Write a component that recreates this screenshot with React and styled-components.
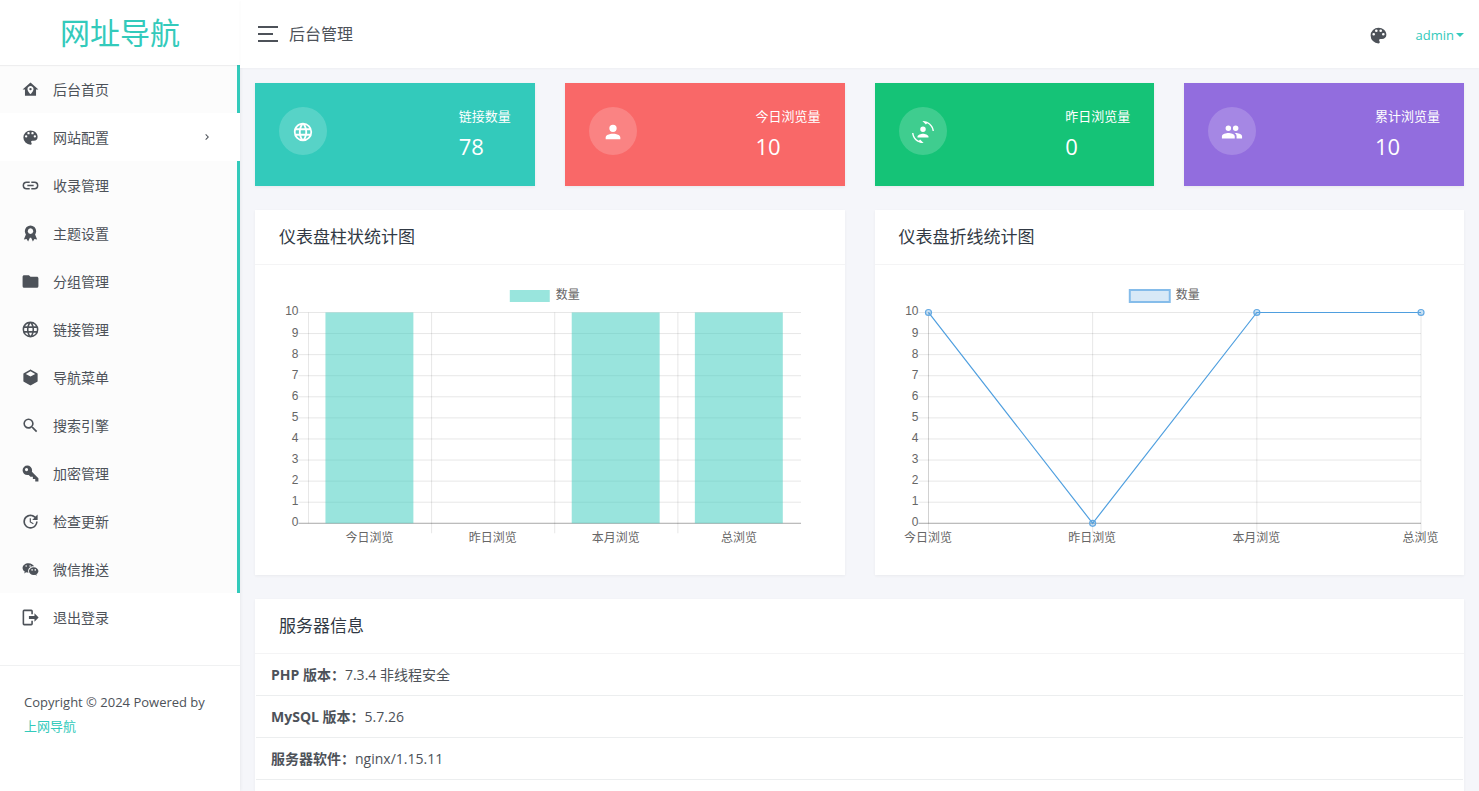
import React from 'react'
import styled, { createGlobalStyle } from 'styled-components';

const Global = createGlobalStyle`
  * { box-sizing: border-box; }
  body {
    margin: 0;
    background: #f5f6fa;
    color: #4d5259;
    font-family: "Open Sans", "Noto Sans CJK SC", sans-serif;
    font-size: 14px;
    line-height: 24px;
  }
  a { color: inherit; text-decoration: none; }
`;

const icons = {
  home: 'M12,3L2,12H5V20H19V12H22L12,3M12,7.7C14.1,7.7 15.8,9.4 15.8,11.5C15.8,14.5 12,18 12,18C12,18 8.2,14.5 8.2,11.5C8.2,9.4 9.9,7.7 12,7.7M12,10A1.5,1.5 0 0,0 10.5,11.5A1.5,1.5 0 0,0 12,13A1.5,1.5 0 0,0 13.5,11.5A1.5,1.5 0 0,0 12,10Z',
  palette: 'M17.5,12A1.5,1.5 0 0,1 16,10.5A1.5,1.5 0 0,1 17.5,9A1.5,1.5 0 0,1 19,10.5A1.5,1.5 0 0,1 17.5,12M14.5,8A1.5,1.5 0 0,1 13,6.5A1.5,1.5 0 0,1 14.5,5A1.5,1.5 0 0,1 16,6.5A1.5,1.5 0 0,1 14.5,8M9.5,8A1.5,1.5 0 0,1 8,6.5A1.5,1.5 0 0,1 9.5,5A1.5,1.5 0 0,1 11,6.5A1.5,1.5 0 0,1 9.5,8M6.5,12A1.5,1.5 0 0,1 5,10.5A1.5,1.5 0 0,1 6.5,9A1.5,1.5 0 0,1 8,10.5A1.5,1.5 0 0,1 6.5,12M12,3A9,9 0 0,0 3,12A9,9 0 0,0 12,21A1.5,1.5 0 0,0 13.5,19.5C13.5,19.11 13.35,18.76 13.11,18.5C12.88,18.23 12.73,17.88 12.73,17.5A1.5,1.5 0 0,1 14.23,16H16A5,5 0 0,0 21,11C21,6.58 16.97,3 12,3Z',
  link: 'M3.9,12C3.9,10.29 5.29,8.9 7,8.9H11V7H7A5,5 0 0,0 2,12A5,5 0 0,0 7,17H11V15.1H7C5.29,15.1 3.9,13.71 3.9,12M8,13H16V11H8V13M17,7H13V8.9H17C18.71,8.9 20.1,10.29 20.1,12C20.1,13.71 18.71,15.1 17,15.1H13V17H17A5,5 0 0,0 22,12A5,5 0 0,0 17,7Z',
  award: 'M9.5,2.4L12,1.8L14.5,2.4L17,3.8L18.6,6.2L19.2,9L18.6,11.8L17.8,13.2L20.4,19.5L17,18.8L15,22L12.8,17.5H11.2L9,22L7,18.8L3.6,19.5L6.2,13.2L5.4,11.8L4.8,9L5.4,6.2L7,3.8L9.5,2.4M12,5.4L9.6,6.4L8.4,9L9.6,11.6L12,12.6L14.4,11.6L15.6,9L14.4,6.4L12,5.4Z',
  folder: 'M10,4H4C2.89,4 2,4.89 2,6V18A2,2 0 0,0 4,20H20A2,2 0 0,0 22,18V8C22,6.89 21.1,6 20,6H12L10,4Z',
  web: 'M16.36,14C16.44,13.34 16.5,12.68 16.5,12C16.5,11.32 16.44,10.66 16.36,10H19.74C19.9,10.64 20,11.31 20,12C20,12.69 19.9,13.36 19.74,14M14.59,19.56C15.19,18.45 15.65,17.25 15.97,16H18.92C17.96,17.65 16.43,18.93 14.59,19.56M14.34,14H9.66C9.56,13.34 9.5,12.68 9.5,12C9.5,11.32 9.56,10.65 9.66,10H14.34C14.43,10.65 14.5,11.32 14.5,12C14.5,12.68 14.43,13.34 14.34,14M12,19.96C11.17,18.76 10.5,17.43 10.09,16H13.91C13.5,17.43 12.83,18.76 12,19.96M8,8H5.08C6.03,6.34 7.57,5.06 9.4,4.44C8.8,5.55 8.35,6.75 8,8M5.08,16H8C8.35,17.25 8.8,18.45 9.4,19.56C7.57,18.93 6.03,17.65 5.08,16M4.26,14C4.1,13.36 4,12.69 4,12C4,11.31 4.1,10.64 4.26,10H7.64C7.56,10.66 7.5,11.32 7.5,12C7.5,12.68 7.56,13.34 7.64,14M12,4.03C12.83,5.23 13.5,6.57 13.91,8H10.09C10.5,6.57 11.17,5.23 12,4.03M18.92,8H15.97C15.65,6.75 15.19,5.55 14.59,4.44C16.43,5.07 17.96,6.34 18.92,8M12,2C6.47,2 2,6.5 2,12A10,10 0 0,0 12,22A10,10 0 0,0 22,12A10,10 0 0,0 12,2Z',
  cube: 'M21,16.5C21,16.88 20.79,17.21 20.47,17.38L12.57,21.82C12.41,21.94 12.21,22 12,22C11.79,22 11.59,21.94 11.43,21.82L3.53,17.38C3.21,17.21 3,16.88 3,16.5V7.5C3,7.12 3.21,6.79 3.53,6.62L11.43,2.18C11.59,2.06 11.79,2 12,2C12.21,2 12.41,2.06 12.57,2.18L20.47,6.62C20.79,6.79 21,7.12 21,7.5V16.5M12,4.15L6.04,7.5L12,10.85L17.96,7.5L12,4.15Z',
  search: 'M9.5,3A6.5,6.5 0 0,1 16,9.5C16,11.11 15.41,12.59 14.44,13.73L14.71,14H15.5L20.5,19L19,20.5L14,15.5V14.71L13.73,14.44C12.59,15.41 11.11,16 9.5,16A6.5,6.5 0 0,1 3,9.5A6.5,6.5 0 0,1 9.5,3M9.5,5C7,5 5,7 5,9.5C5,12 7,14 9.5,14C12,14 14,12 14,9.5C14,7 12,5 9.5,5Z',
  key: 'M22,18V22H18V19H15V16H12L9.74,13.74C9.19,13.91 8.61,14 8,14A6,6 0 0,1 2,8A6,6 0 0,1 8,2A6,6 0 0,1 14,8C14,8.61 13.91,9.19 13.74,9.74L22,18M7,5A2,2 0 0,0 5,7A2,2 0 0,0 7,9A2,2 0 0,0 9,7A2,2 0 0,0 7,5Z',
  update: 'M21,10.12H14.22L16.96,7.3C14.23,4.6 9.81,4.5 7.08,7.2C4.35,9.91 4.35,14.28 7.08,17C9.81,19.7 14.23,19.7 16.96,17C18.32,15.65 19,14.08 19,12.1H21C21,14.08 20.12,16.65 18.36,18.39C14.85,21.87 9.15,21.87 5.64,18.39C2.14,14.92 2.11,9.28 5.62,5.81C9.13,2.34 14.76,2.34 18.27,5.81L21,3V10.12M12.5,8V12.25L16,14.33L15.28,15.54L11,13V8H12.5Z',
  wechat: 'M9.5,4C5.36,4 2,6.69 2,10C2,11.89 3.08,13.56 4.78,14.66L4,17L6.5,15.5C7.39,15.81 8.37,16 9.41,16C9.15,15.37 9,14.7 9,14C9,10.69 12.13,8 16,8C16.19,8 16.38,8 16.56,8.03C15.54,5.69 12.78,4 9.5,4M6.5,6.5A1,1 0 0,1 7.5,7.5A1,1 0 0,1 6.5,8.5A1,1 0 0,1 5.5,7.5A1,1 0 0,1 6.5,6.5M11.5,6.5A1,1 0 0,1 12.5,7.5A1,1 0 0,1 11.5,8.5A1,1 0 0,1 10.5,7.5A1,1 0 0,1 11.5,6.5M16,9C12.69,9 10,11.24 10,14C10,16.76 12.69,19 16,19C16.67,19 17.31,18.92 17.91,18.75L20,20L19.38,18.13C20.95,17.22 22,15.71 22,14C22,11.24 19.31,9 16,9M14,11.5A1,1 0 0,1 15,12.5A1,1 0 0,1 14,13.5A1,1 0 0,1 13,12.5A1,1 0 0,1 14,11.5M18,11.5A1,1 0 0,1 19,12.5A1,1 0 0,1 18,13.5A1,1 0 0,1 17,12.5A1,1 0 0,1 18,11.5Z',
  logout: 'M17,17.25V14H10V10H17V6.75L22.25,12L17,17.25M13,2A2,2 0 0,1 15,4V8H13V4H4V20H13V16H15V20A2,2 0 0,1 13,22H4A2,2 0 0,1 2,20V4A2,2 0 0,1 4,2H13Z',
  user: 'M12,4A4,4 0 0,1 16,8A4,4 0 0,1 12,12A4,4 0 0,1 8,8A4,4 0 0,1 12,4M12,14C16.42,14 20,15.79 20,18V20H4V18C4,15.79 7.58,14 12,14Z',
  convert: 'M7.5,21.5C4.25,19.94 1.91,16.76 1.55,13H0.05C0.56,19.16 5.71,24 12,24L12.66,23.97L8.85,20.16L7.5,21.5M16.5,2.5C19.75,4.07 22.09,7.24 22.45,11H23.95C23.44,4.84 18.29,0 12,0L11.34,0.03L15.15,3.84L16.5,2.5M6,17C6,15 10,13.9 12,13.9C14,13.9 18,15 18,17V18H6V17M15,9A3,3 0 0,1 12,12A3,3 0 0,1 9,9A3,3 0 0,1 12,6A3,3 0 0,1 15,9Z',
  users: 'M16,13C15.71,13 15.38,13 15.03,13.05C16.19,13.89 17,15 17,16.5V19H23V16.5C23,14.17 18.33,13 16,13M8,13C5.67,13 1,14.17 1,16.5V19H15V16.5C15,14.17 10.33,13 8,13M8,11A3,3 0 0,0 11,8A3,3 0 0,0 8,5A3,3 0 0,0 5,8A3,3 0 0,0 8,11M16,11A3,3 0 0,0 19,8A3,3 0 0,0 16,5A3,3 0 0,0 13,8A3,3 0 0,0 16,11Z',
  chevron: 'M8.59,16.58L13.17,12L8.59,7.41L10,6L16,12L10,18L8.59,16.58Z',
};

function Icon({ name, size = 19 }) {
  return (
    <svg width={size} height={size} viewBox="0 0 24 24" fill="currentColor" aria-hidden="true">
      <path d={icons[name]} />
    </svg>
  );
}

const Page = styled.div`
  display: flex;
  min-height: 100vh;
`;

const Sidebar = styled.aside`
  flex: none;
  width: 240px;
  background: white;
  box-shadow: 0 0 4px rgba(0, 0, 0, 0.08);
`;

const Logo = styled.a`
  display: block;
  position: relative;
  height: 65px;
  line-height: 66px;
  text-align: center;
  font-size: 30px;
  color: #33cabb;
  box-shadow: 0 1px 1px rgba(77, 82, 89, 0.08);
`;

const Menu = styled.nav`
  display: flex;
  flex-direction: column;
  padding-bottom: 24px;
  border-bottom: 1px solid #f0f1f2;
`;

const MenuItem = styled.a`
  display: flex;
  align-items: center;
  height: 48px;
  padding: 0 27px 0 21px;
  background: ${props => props.$active ? "#fcfcfc" : "white"};
  border-right: ${props => props.$active ? "3px solid #33cabb" : "none"};
`;

const MenuText = styled.span`
  flex: 1;
  margin-left: 13px;
  padding-top: 2px;
`;

const Copyright = styled.footer`
  padding: 24px;
  font-size: 13px;
  a { color: #33cabb; }
`;

const Main = styled.div`
  display: flex;
  flex: 1;
  flex-direction: column;
  min-width: 0;
`;

const Header = styled.header`
  display: flex;
  align-items: center;
  justify-content: space-between;
  height: 68px;
  padding: 0 15px 0 18px;
  background: white;
  box-shadow: 0 1px 2px rgba(0, 0, 0, 0.03);
`;

const HeaderSide = styled.div`
  display: flex;
  align-items: center;
  gap: ${props => props.$gap};
`;

const HeaderTools = styled(HeaderSide)`
  padding-top: 2px;
`;

const Toggler = styled.button`
  display: flex;
  flex-direction: column;
  gap: 5px;
  width: 20px;
  padding: 0;
  border: none;
  background: none;
`;

const TogglerBar = styled.span`
  width: ${props => props.$short ? "15px" : "20px"};
  height: 2px;
  background: #4d5259;
`;

const PageTitle = styled.span`
  font-size: 16px;
`;

const ThemeButton = styled.button`
  display: flex;
  padding: 0;
  border: none;
  background: none;
  color: #4d5259;
`;

const UserButton = styled.button`
  display: flex;
  align-items: center;
  gap: 2px;
  padding: 0;
  border: none;
  background: none;
  color: #33cabb;
  font: inherit;
  font-size: 13px;
`;

const Caret = styled.span`
  border-top: 4px solid;
  border-left: 4px solid transparent;
  border-right: 4px solid transparent;
`;

const Content = styled.main`
  display: grid;
  flex: 1;
  grid-template-columns: repeat(4, 1fr);
  grid-template-rows: auto auto 1fr;
  gap: 24px 30px;
  padding: 15px 15px 0;
`;

const StatCard = styled.section`
  display: flex;
  justify-content: space-between;
  height: 103px;
  padding: 24px;
  color: white;
  background: ${props => props.$color};
  box-shadow: 0 1px 3px rgba(0, 0, 0, 0.06);
`;

const StatIcon = styled.span`
  display: flex;
  align-items: center;
  justify-content: center;
  width: 48px;
  height: 48px;
  padding-top: 2px;
  border-radius: 50%;
  background: rgba(255, 255, 255, 0.18);
`;

const StatLabel = styled.p`
  margin: 0;
  font-size: 13px;
  line-height: 18px;
`;

const StatValue = styled.p`
  margin: 0;
  padding-top: 5px;
  font-size: 22px;
  line-height: 32px;
`;

const Card = styled.section`
  grid-column: span ${props => props.$span};
  background: white;
  box-shadow: 0 1px 3px rgba(0, 0, 0, 0.05);
`;

const CardTitle = styled.h4`
  margin: 0;
  padding: 15px 24px;
  border-bottom: 1px solid #f4f4f5;
  color: #313944;
  font-size: 17px;
  font-weight: 400;
  line-height: 24px;
`;

const CardBody = styled.div`
  padding: 20px 24px;
`;

const Chart = styled.svg`
  display: block;
  width: 100%;
  height: auto;
  font-family: "Liberation Sans", "Noto Sans CJK SC", sans-serif;
  font-size: 12px;
  fill: #666;
`;

const InfoList = styled.ul`
  margin: 0 1px;
  padding: 0;
  list-style: none;
`;

const InfoItem = styled.li`
  height: 42px;
  padding: 0 15px;
  line-height: 42px;
  border-bottom: 1px solid #eceeef;
`;

const menu = [
  { icon: 'home', text: '后台首页', active: true },
  { icon: 'palette', text: '网站配置', more: true },
  { icon: 'link', text: '收录管理', active: true },
  { icon: 'award', text: '主题设置', active: true },
  { icon: 'folder', text: '分组管理', active: true },
  { icon: 'web', text: '链接管理', active: true },
  { icon: 'cube', text: '导航菜单', active: true },
  { icon: 'search', text: '搜索引擎', active: true },
  { icon: 'key', text: '加密管理', active: true },
  { icon: 'update', text: '检查更新', active: true },
  { icon: 'wechat', text: '微信推送', active: true },
  { icon: 'logout', text: '退出登录' },
];

const stats = [
  { icon: 'web', label: '链接数量', value: 78, color: '#33cabb' },
  { icon: 'user', label: '今日浏览量', value: 10, color: '#f96868' },
  { icon: 'convert', label: '昨日浏览量', value: 0, color: '#15c377' },
  { icon: 'users', label: '累计浏览量', value: 10, color: '#926dde' },
];

const views = [
  { label: '今日浏览', value: 10 },
  { label: '昨日浏览', value: 0 },
  { label: '本月浏览', value: 10 },
  { label: '总浏览', value: 10 },
];

const info = [
  { name: 'PHP 版本：', value: '7.3.4 非线程安全' },
  { name: 'MySQL 版本：', value: '5.7.26' },
  { name: '服务器软件：', value: 'nginx/1.15.11' },
];

// plot area inside the 542 x 270 chart box
const left = 29.5;
const right = 522.5;
const top = 27.5;
const bottom = 238.5;
const grid = 'rgba(0, 0, 0, 0.1)';
const yOf = value => bottom - (bottom - top) * value / 10;

function YAxis() {
  return Array.from({ length: 11 }, (_, i) => (
    <g key={i}>
      <line x1={left - 10} x2={right} y1={yOf(i)} y2={yOf(i)} stroke={i ? grid : 'rgba(0, 0, 0, 0.35)'} />
      <text x={left - 10} y={yOf(i) + 3} textAnchor="end">{i}</text>
    </g>
  ));
}

function BarChart() {
  const step = (right - left) / views.length;
  return (
    <Chart viewBox="0 0 542 270" role="img" aria-label="仪表盘柱状统计图">
      <rect x="231" y="5" width="40" height="12" fill="#99e5dd" />
      <text x="277" y="14">数量</text>
      <YAxis />
      <line x1={left} x2={left} y1={top} y2={bottom} stroke={grid} />
      {views.map((item, i) => (
        <g key={item.label}>
          {i > 0 && <line x1={left + step * i} x2={left + step * i} y1={top} y2={bottom + 10} stroke={grid} />}
          <rect x={left + step * i + 17} y={yOf(item.value)} width="88" height={bottom - yOf(item.value)} fill="rgba(51, 202, 187, 0.5)" />
          <text x={left + step * (i + 0.5) - 0.5} y="257" textAnchor="middle">{item.label}</text>
        </g>
      ))}
    </Chart>
  );
}

function LineChart() {
  const step = (right - left) / (views.length - 1);
  const points = views.map((item, i) => [left + step * i, yOf(item.value)]);
  return (
    <Chart viewBox="0 0 542 270" role="img" aria-label="仪表盘折线统计图">
      <rect x="231" y="5" width="40" height="12" fill="#d8e9f7" stroke="#85bcea" strokeWidth="2" />
      <text x="277" y="14">数量</text>
      <YAxis />
      <line x1={left} x2={left} y1={top} y2={bottom} stroke={grid} />
      {views.map((item, i) => (
        <g key={item.label}>
          <line x1={points[i][0]} x2={points[i][0]} y1={top} y2={bottom + 10} stroke={grid} />
          <text x={points[i][0] - 0.5} y="257" textAnchor="middle">{item.label}</text>
        </g>
      ))}
      <polyline points={points.join(' ')} fill="none" stroke="#4f9fdf" strokeWidth="1.2" />
      {points.map(([x, y]) => (
        <circle key={x} cx={x} cy={y} r="3" fill="rgba(79, 159, 223, 0.3)" stroke="#64a9e2" strokeWidth="1.2" />
      ))}
    </Chart>
  );
}

function App() {
  return (
    <Page>
      <Global />
      <Sidebar>
        <Logo href="#">网址导航</Logo>
        <Menu>
          {menu.map(item => (
            <MenuItem key={item.text} href="#" $active={item.active}>
              <Icon name={item.icon} />
              <MenuText>{item.text}</MenuText>
              {item.more && <Icon name="chevron" size={12} />}
            </MenuItem>
          ))}
        </Menu>
        <Copyright>
          Copyright © 2024 Powered by <a href="#">上网导航</a>
        </Copyright>
      </Sidebar>
      <Main>
        <Header>
          <HeaderSide $gap="11px">
            <Toggler aria-label="切换菜单">
              <TogglerBar />
              <TogglerBar $short />
              <TogglerBar />
            </Toggler>
            <PageTitle>后台管理</PageTitle>
          </HeaderSide>
          <HeaderTools $gap="27px">
            <ThemeButton aria-label="主题">
              <Icon name="palette" size={21} />
            </ThemeButton>
            <UserButton>admin<Caret /></UserButton>
          </HeaderTools>
        </Header>
        <Content>
          {stats.map(item => (
            <StatCard key={item.label} $color={item.color}>
              <StatIcon><Icon name={item.icon} size={22} /></StatIcon>
              <div>
                <StatLabel>{item.label}</StatLabel>
                <StatValue>{item.value}</StatValue>
              </div>
            </StatCard>
          ))}
          <Card $span={2}>
            <CardTitle>仪表盘柱状统计图</CardTitle>
            <CardBody><BarChart /></CardBody>
          </Card>
          <Card $span={2}>
            <CardTitle>仪表盘折线统计图</CardTitle>
            <CardBody><LineChart /></CardBody>
          </Card>
          <Card $span={4}>
            <CardTitle>服务器信息</CardTitle>
            <InfoList>
              {info.map(item => (
                <InfoItem key={item.name}><b>{item.name}</b>{item.value}</InfoItem>
              ))}
            </InfoList>
          </Card>
        </Content>
      </Main>
    </Page>
  );
}

export default App
